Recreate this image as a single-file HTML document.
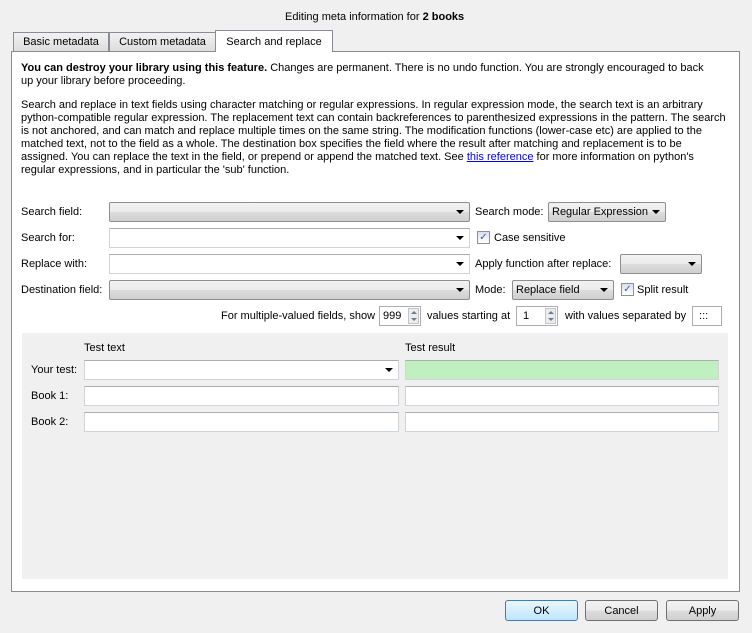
<!DOCTYPE html>
<html><head><meta charset="utf-8"><style>
*{box-sizing:border-box}
body{margin:0;width:752px;height:633px;background:#f0f0f0;font-family:"Liberation Sans",sans-serif;font-size:11px;color:#000;position:relative;overflow:hidden}
.a{position:absolute;white-space:nowrap;line-height:13px}
.tab{position:absolute;border:1px solid #898c95;border-bottom:none;background:linear-gradient(#f2f2f2,#dcdcdc);text-align:center;line-height:18px}
.pane{position:absolute;left:11px;top:51px;width:729px;height:541px;background:#fff;border:1px solid #898c95}
.cb{position:absolute;border:1px solid #8e8f8f;border-radius:2px;background:linear-gradient(#f2f2f2 0%,#ebebeb 50%,#dddddd 51%,#cfcfcf 100%)}
.ed{position:absolute;border:1px solid #d0d3d8;background:#fff;border-top-color:#abadb3}
.arr{position:absolute;right:5px;top:7px;width:0;height:0;border-left:4px solid transparent;border-right:4px solid transparent;border-top:4px solid #000}
.ck{position:absolute;width:13px;height:13px;border:1px solid #8e8f8f;background:linear-gradient(#dde,#fff);font-size:10px;line-height:11px;text-align:center;color:#3a5fa8}
.sp{position:absolute;border:1px solid #abadb3;background:#fff;padding-left:3px;line-height:18px}
.sp i{position:absolute;right:1px;top:1px;width:11px;height:16px;background:#ececec;border:1px solid #c4c4c4}
.sp i:before{content:"";position:absolute;left:2px;top:2px;border-left:3px solid transparent;border-right:3px solid transparent;border-bottom:3px solid #6a7b95}
.sp i:after{content:"";position:absolute;left:2px;top:9px;border-left:3px solid transparent;border-right:3px solid transparent;border-top:3px solid #6a7b95}
.btn{position:absolute;border:1px solid #707070;border-radius:3px;background:linear-gradient(#f2f2f2 0%,#ebebeb 50%,#dddddd 51%,#cfcfcf 100%);text-align:center;line-height:20px}
</style></head><body>
<div class="a" style="left:285px;top:11px">Editing meta information for <b>2 books</b></div>
<div class="tab" style="left:13px;top:32px;width:96px;height:20px">Basic metadata</div>
<div class="tab" style="left:109px;top:32px;width:107px;height:20px">Custom metadata</div>
<div class="pane"></div>
<div class="tab" style="left:215px;top:30px;width:118px;height:22px;background:#fff;line-height:22px;z-index:2">Search and replace</div>

<div class="a" style="left:21px;top:62px"><b>You can destroy your library using this feature.</b> Changes are permanent. There is no undo function. You are strongly encouraged to back</div>
<div class="a" style="left:21px;top:75px">up your library before proceeding.</div>
<div class="a" style="left:21px;top:99px">Search and replace in text fields using character matching or regular expressions. In regular expression mode, the search text is an arbitrary</div>
<div class="a" style="left:21px;top:112px">python-compatible regular expression. The replacement text can contain backreferences to parenthesized expressions in the pattern. The search</div>
<div class="a" style="left:21px;top:125px">is not anchored, and can match and replace multiple times on the same string. The modification functions (lower-case etc) are applied to the</div>
<div class="a" style="left:21px;top:138px">matched text, not to the field as a whole. The destination box specifies the field where the result after matching and replacement is to be</div>
<div class="a" style="left:21px;top:151px">assigned. You can replace the text in the field, or prepend or append the matched text. See <span style="color:#0000ee;text-decoration:underline">this reference</span> for more information on python's</div>
<div class="a" style="left:21px;top:164px">regular expressions, and in particular the 'sub' function.</div>

<div class="a" style="left:21px;top:206px">Search field:</div>
<div class="cb" style="left:109px;top:202px;width:361px;height:20px"><span class="arr"></span></div>
<div class="a" style="left:475px;top:206px">Search mode:</div>
<div class="cb" style="left:548px;top:202px;width:118px;height:20px"><span class="a" style="left:3px;top:3px">Regular Expression</span><span class="arr"></span></div>

<div class="a" style="left:21px;top:232px">Search for:</div>
<div class="ed" style="left:109px;top:228px;width:361px;height:20px"><span class="arr"></span></div>
<div class="ck" style="left:477px;top:231px">✓</div>
<div class="a" style="left:494px;top:232px">Case sensitive</div>

<div class="a" style="left:21px;top:258px">Replace with:</div>
<div class="ed" style="left:109px;top:254px;width:361px;height:20px"><span class="arr"></span></div>
<div class="a" style="left:475px;top:258px">Apply function after replace:</div>
<div class="cb" style="left:620px;top:254px;width:82px;height:20px"><span class="arr"></span></div>

<div class="a" style="left:21px;top:284px">Destination field:</div>
<div class="cb" style="left:109px;top:280px;width:361px;height:20px"><span class="arr"></span></div>
<div class="a" style="left:475px;top:284px">Mode:</div>
<div class="cb" style="left:512px;top:280px;width:102px;height:20px"><span class="a" style="left:3px;top:3px">Replace field</span><span class="arr"></span></div>
<div class="ck" style="left:621px;top:283px">✓</div>
<div class="a" style="left:637px;top:284px">Split result</div>

<div class="a" style="left:221px;top:310px">For multiple-valued fields, show</div>
<div class="sp" style="left:379px;top:306px;width:42px;height:20px">999<i></i></div>
<div class="a" style="left:427px;top:310px">values starting at</div>
<div class="sp" style="left:516px;top:306px;width:42px;height:20px">&nbsp;1<i></i></div>
<div class="a" style="left:565px;top:310px">with values separated by</div>
<div class="sp" style="left:692px;top:306px;width:30px;height:20px">&nbsp;:::</div>

<div style="position:absolute;left:22px;top:333px;width:706px;height:246px;background:#f0f0f0"></div>
<div class="a" style="left:84px;top:342px">Test text</div>
<div class="a" style="left:405px;top:342px">Test result</div>
<div class="a" style="left:31px;top:364px">Your test:</div>
<div class="ed" style="left:84px;top:360px;width:315px;height:20px"><span class="arr"></span></div>
<div class="ed" style="left:405px;top:360px;width:314px;height:20px;background:#c0f0c0"></div>
<div class="a" style="left:31px;top:390px">Book 1:</div>
<div class="ed" style="left:84px;top:386px;width:315px;height:20px"></div>
<div class="ed" style="left:405px;top:386px;width:314px;height:20px"></div>
<div class="a" style="left:31px;top:416px">Book 2:</div>
<div class="ed" style="left:84px;top:412px;width:315px;height:20px"></div>
<div class="ed" style="left:405px;top:412px;width:314px;height:20px"></div>

<div class="btn" style="left:505px;top:600px;width:73px;height:21px;border-color:#3c7fb1;background:linear-gradient(#eaf6fd,#bee6fd)">OK</div>
<div class="btn" style="left:585px;top:600px;width:73px;height:21px">Cancel</div>
<div class="btn" style="left:666px;top:600px;width:73px;height:21px">Apply</div>
</body></html>
